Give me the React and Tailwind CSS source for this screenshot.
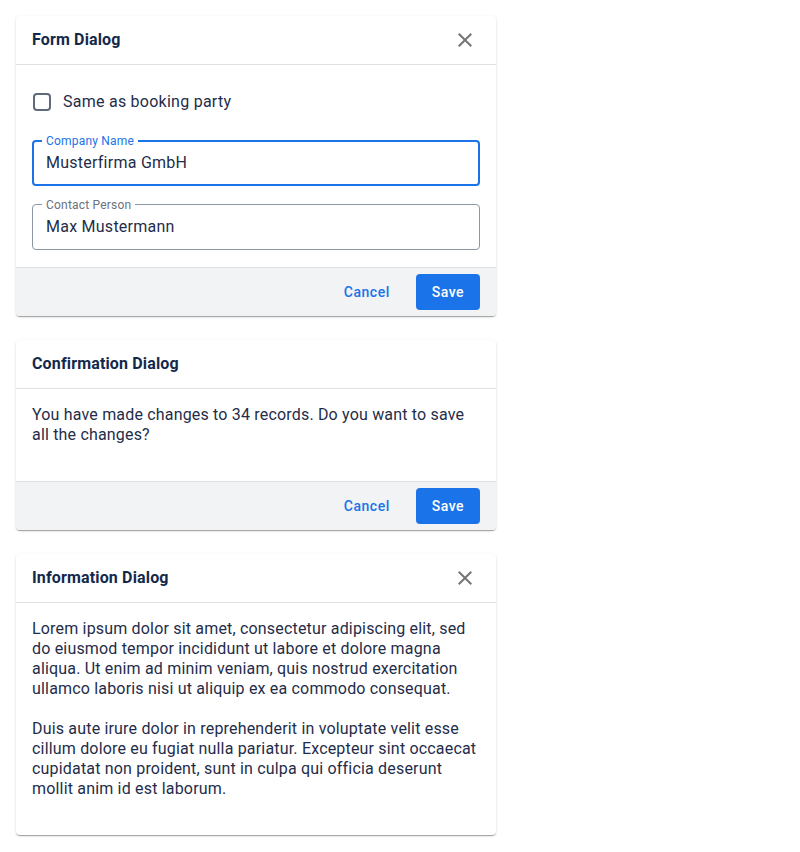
const font = { fontFamily: "Roboto, 'Noto Sans', sans-serif" };

function CloseIcon() {
  return (
    <svg width="24" height="24" viewBox="0 0 24 24" className="fill-[#757575]">
      <path d="M19 6.41 17.59 5 12 10.59 6.41 5 5 6.41 10.59 12 5 17.59 6.41 19 12 13.41 17.59 19 19 17.59 13.41 12z" />
    </svg>
  );
}

function Dialog({ title, closable, children, footer }) {
  return (
    <div className="w-[480px] rounded bg-white shadow-[0_2px_1px_-1px_rgba(0,0,0,0.2),0_1px_1px_0_rgba(0,0,0,0.14),0_1px_3px_0_rgba(0,0,0,0.12)] overflow-hidden">
      <div className="h-[49px] flex items-center justify-between pl-4 pr-[19px] border-b border-[#e0e0e0]">
        <h2 className="text-base font-bold tracking-[0.15px] text-[#13294b]">{title}</h2>
        {closable && <CloseIcon />}
      </div>
      {children}
      {footer && (
        <div className="flex justify-end items-center gap-[10px] px-4 py-1.5 bg-[#f1f3f5] border-t border-[#e0e0e0]">
          <button className="h-9 px-4 rounded text-sm font-medium tracking-[0.5px] text-[#1a73e8]">Cancel</button>
          <button className="h-9 px-4 rounded text-sm font-medium tracking-[0.5px] text-white bg-[#1a73e8]">Save</button>
        </div>
      )}
    </div>
  );
}

function Field({ label, value, focused }) {
  return (
    <div
      className={
        focused
          ? "relative h-[46px] rounded border-2 border-[#1a73e8] px-3 flex items-center"
          : "relative h-[46px] rounded border border-[#8c96a5] px-[13px] flex items-center"
      }
    >
      <span
        className={
          focused
            ? "absolute -top-[9px] left-[8px] px-1 bg-white text-xs leading-4 tracking-[0.2px] text-[#1a73e8]"
            : "absolute -top-[8px] left-[9px] px-1 bg-white text-xs leading-4 tracking-[0.2px] text-[#6b7280]"
        }
      >
        {label}
      </span>
      <span className="text-base tracking-[0.25px] text-[#1f2d4a]">{value}</span>
    </div>
  );
}

export default function App() {
  return (
    <div className="min-h-screen bg-white p-4 flex flex-col gap-6" style={font}>
      <Dialog title="Form Dialog" closable footer>
        <div className="px-4 pt-4 pb-[17px]">
          <label className="h-[42px] flex items-center gap-3">
            <span className="ml-px w-[18px] h-[18px] rounded-sm border-2 border-[#5f6b7a]" />
            <span className="text-base tracking-[0.25px] text-[#1f2d4a]">Same as booking party</span>
          </label>
          <div className="mt-[17px] flex flex-col gap-[18px]">
            <Field label="Company Name" value="Musterfirma GmbH" focused />
            <Field label="Contact Person" value="Max Mustermann" />
          </div>
        </div>
      </Dialog>

      <Dialog title="Confirmation Dialog" footer>
        <div className="p-4 text-base leading-5 tracking-[0.18px] text-[#1f2d4a]">
          <p className="mb-5">You have made changes to 34 records. Do you want to save all the changes?</p>
        </div>
      </Dialog>

      <Dialog title="Information Dialog" closable>
        <div className="p-4 text-base leading-5 tracking-[0.18px] text-[#1f2d4a]">
          <p className="mb-5">
            Lorem ipsum dolor sit amet, consectetur adipiscing elit, sed do eiusmod tempor incididunt ut labore et
            dolore magna aliqua. Ut enim ad minim veniam, quis nostrud exercitation ullamco laboris nisi ut aliquip ex
            ea commodo consequat.
          </p>
          <p className="mb-5">
            Duis aute irure dolor in reprehenderit in voluptate velit esse cillum dolore eu fugiat nulla pariatur.
            Excepteur sint occaecat cupidatat non proident, sunt in culpa qui officia deserunt mollit anim id est
            laborum.
          </p>
        </div>
      </Dialog>
    </div>
  );
}
